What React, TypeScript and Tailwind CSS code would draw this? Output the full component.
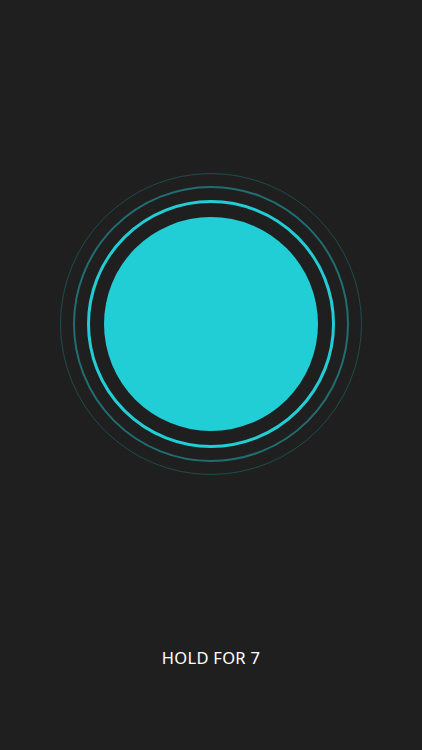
export default function App() {
  return (
    <div className="flex h-[750px] w-full flex-col items-center bg-[#1f1f1f] pt-[173px] font-['Noto_Sans',sans-serif]">
      {/* rings */}
      <div className="flex h-[302px] w-[302px] items-center justify-center rounded-full border border-[#22ced6]/25">
        <div className="flex h-[276px] w-[276px] items-center justify-center rounded-full border-2 border-[#22ced6]/45">
          <div className="flex h-[248px] w-[248px] items-center justify-center rounded-full border-[3.5px] border-[#22ced6]">
            <div className="h-[214px] w-[214px] rounded-full bg-[#22ced6]" />
          </div>
        </div>
      </div>

      <div className="mt-[173px] text-[16.5px] leading-[20px] tracking-[0.3px] text-white">
        HOLD FOR 7
      </div>
    </div>
  );
}
